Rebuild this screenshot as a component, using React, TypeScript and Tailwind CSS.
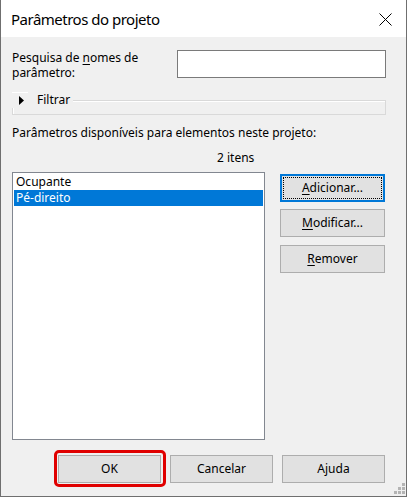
import type { ReactNode } from "react";

const font = "font-['Noto_Sans',sans-serif]";

function Btn({
  children,
  focused,
  wide = true,
  className = "",
}: {
  children: ReactNode;
  focused?: boolean;
  wide?: boolean;
  className?: string;
}) {
  return (
    <button
      className={
        "relative h-[28px] bg-[#e1e1e1] text-[12px] leading-[16px] text-black " +
        (wide ? "w-[105px] " : "w-[103px] ") +
        (focused ? "border-2 border-[#0078d7] " : "border border-[#adadad] ") +
        className
      }
    >
      {focused && <span className="absolute inset-px border border-dotted border-black" />}
      <span className="relative">{children}</span>
    </button>
  );
}

export default function App() {
  return (
    <div className={`${font} relative flex h-[497px] w-[407px] flex-col border-x border-b border-[#6f6f6f] bg-[#f0f0f0] text-black`}>
      {/* title bar */}
      <div className="flex h-[37px] shrink-0 items-center justify-between bg-white pl-[10px] pr-[14px]">
        <span className="text-[15px] leading-[20px] tracking-[-0.5px]">Parâmetros do projeto</span>
        <svg width="13" height="13" viewBox="0 0 13 13" className="mt-px">
          <path d="M0.5 0.5 L12.5 12.5 M12.5 0.5 L0.5 12.5" stroke="#000" strokeWidth="1" fill="none" />
        </svg>
      </div>

      <div className="flex flex-1 flex-col pl-[11px] pr-[20px] pt-[13px] text-[12px] leading-[15px]">
        {/* search */}
        <div className="flex items-start justify-between">
          <div className="w-[160px]">
            Pesquisa de <u className="underline-offset-2">n</u>omes de
            <br />
            parâmetro:
          </div>
          <input className="h-[28px] w-[209px] border border-[#7a7a7a] bg-white outline-none" />
        </div>

        {/* filter group */}
        <div className="relative mt-[20px] h-[15px] border border-[#d9d9d9] shadow-[inset_1px_1px_0_#fff]">
          <div className="absolute left-[-1px] top-[-9px] flex h-[16px] w-[61px] items-center bg-[#f0f0f0] leading-[16px]">
            <span className="absolute left-0 top-0 h-px w-[16px] bg-white" />
            <svg width="5" height="9" viewBox="0 0 5 9" className="ml-[7px]">
              <path d="M0 0 L5 4.5 L0 9 Z" fill="#000" />
            </svg>
            <span className="ml-[13px]">Filtrar</span>
          </div>
        </div>

        <div className="mt-[10px] leading-[16px]">Parâmetros disponíveis para elementos neste projeto:</div>
        <div className="mt-[9px] pl-[205px] leading-[16px]">2 itens</div>

        {/* list + side buttons */}
        <div className="mt-[6px] flex">
          <div className="h-[268px] w-[253px] border border-[#828790] bg-white p-px leading-[16px]">
            <div className="pl-[2px]">Ocupante</div>
            <div className="bg-[#0078d7] pl-[2px] text-white">Pé-direito</div>
          </div>
          <div className="ml-[15px] flex flex-col pt-[2px]">
            <Btn focused>
              <u className="underline-offset-2">A</u>dicionar...
            </Btn>
            <Btn className="mt-[7px]">
              <u className="underline-offset-2">M</u>odificar...
            </Btn>
            <Btn className="mt-[8px]">
              <u className="underline-offset-2">R</u>emover
            </Btn>
          </div>
        </div>

        {/* bottom buttons */}
        <div className="mt-[15px] flex justify-end gap-[9px] pr-px">
          <div className="relative">
            <Btn wide={false}>OK</Btn>
            <span className="pointer-events-none absolute -bottom-[4px] -left-[4px] -right-[5px] -top-[5px] rounded-[5px] border-[3px] border-[#e00000]" />
          </div>
          <Btn wide={false}>Cancelar</Btn>
          <Btn wide={false}>Ajuda</Btn>
        </div>
      </div>

      {/* resize grip */}
      <div className="absolute bottom-[2px] right-[1px] grid grid-cols-3 gap-px">
        <span />
        <span />
        <span className="h-[3px] w-[3px] bg-[#b4b4b4]" />
        <span />
        <span className="h-[3px] w-[3px] bg-[#b4b4b4]" />
        <span className="h-[3px] w-[3px] bg-[#b4b4b4]" />
        <span className="h-[3px] w-[3px] bg-[#b4b4b4]" />
        <span className="h-[3px] w-[3px] bg-[#b4b4b4]" />
        <span className="h-[3px] w-[3px] bg-[#b4b4b4]" />
      </div>
    </div>
  );
}
